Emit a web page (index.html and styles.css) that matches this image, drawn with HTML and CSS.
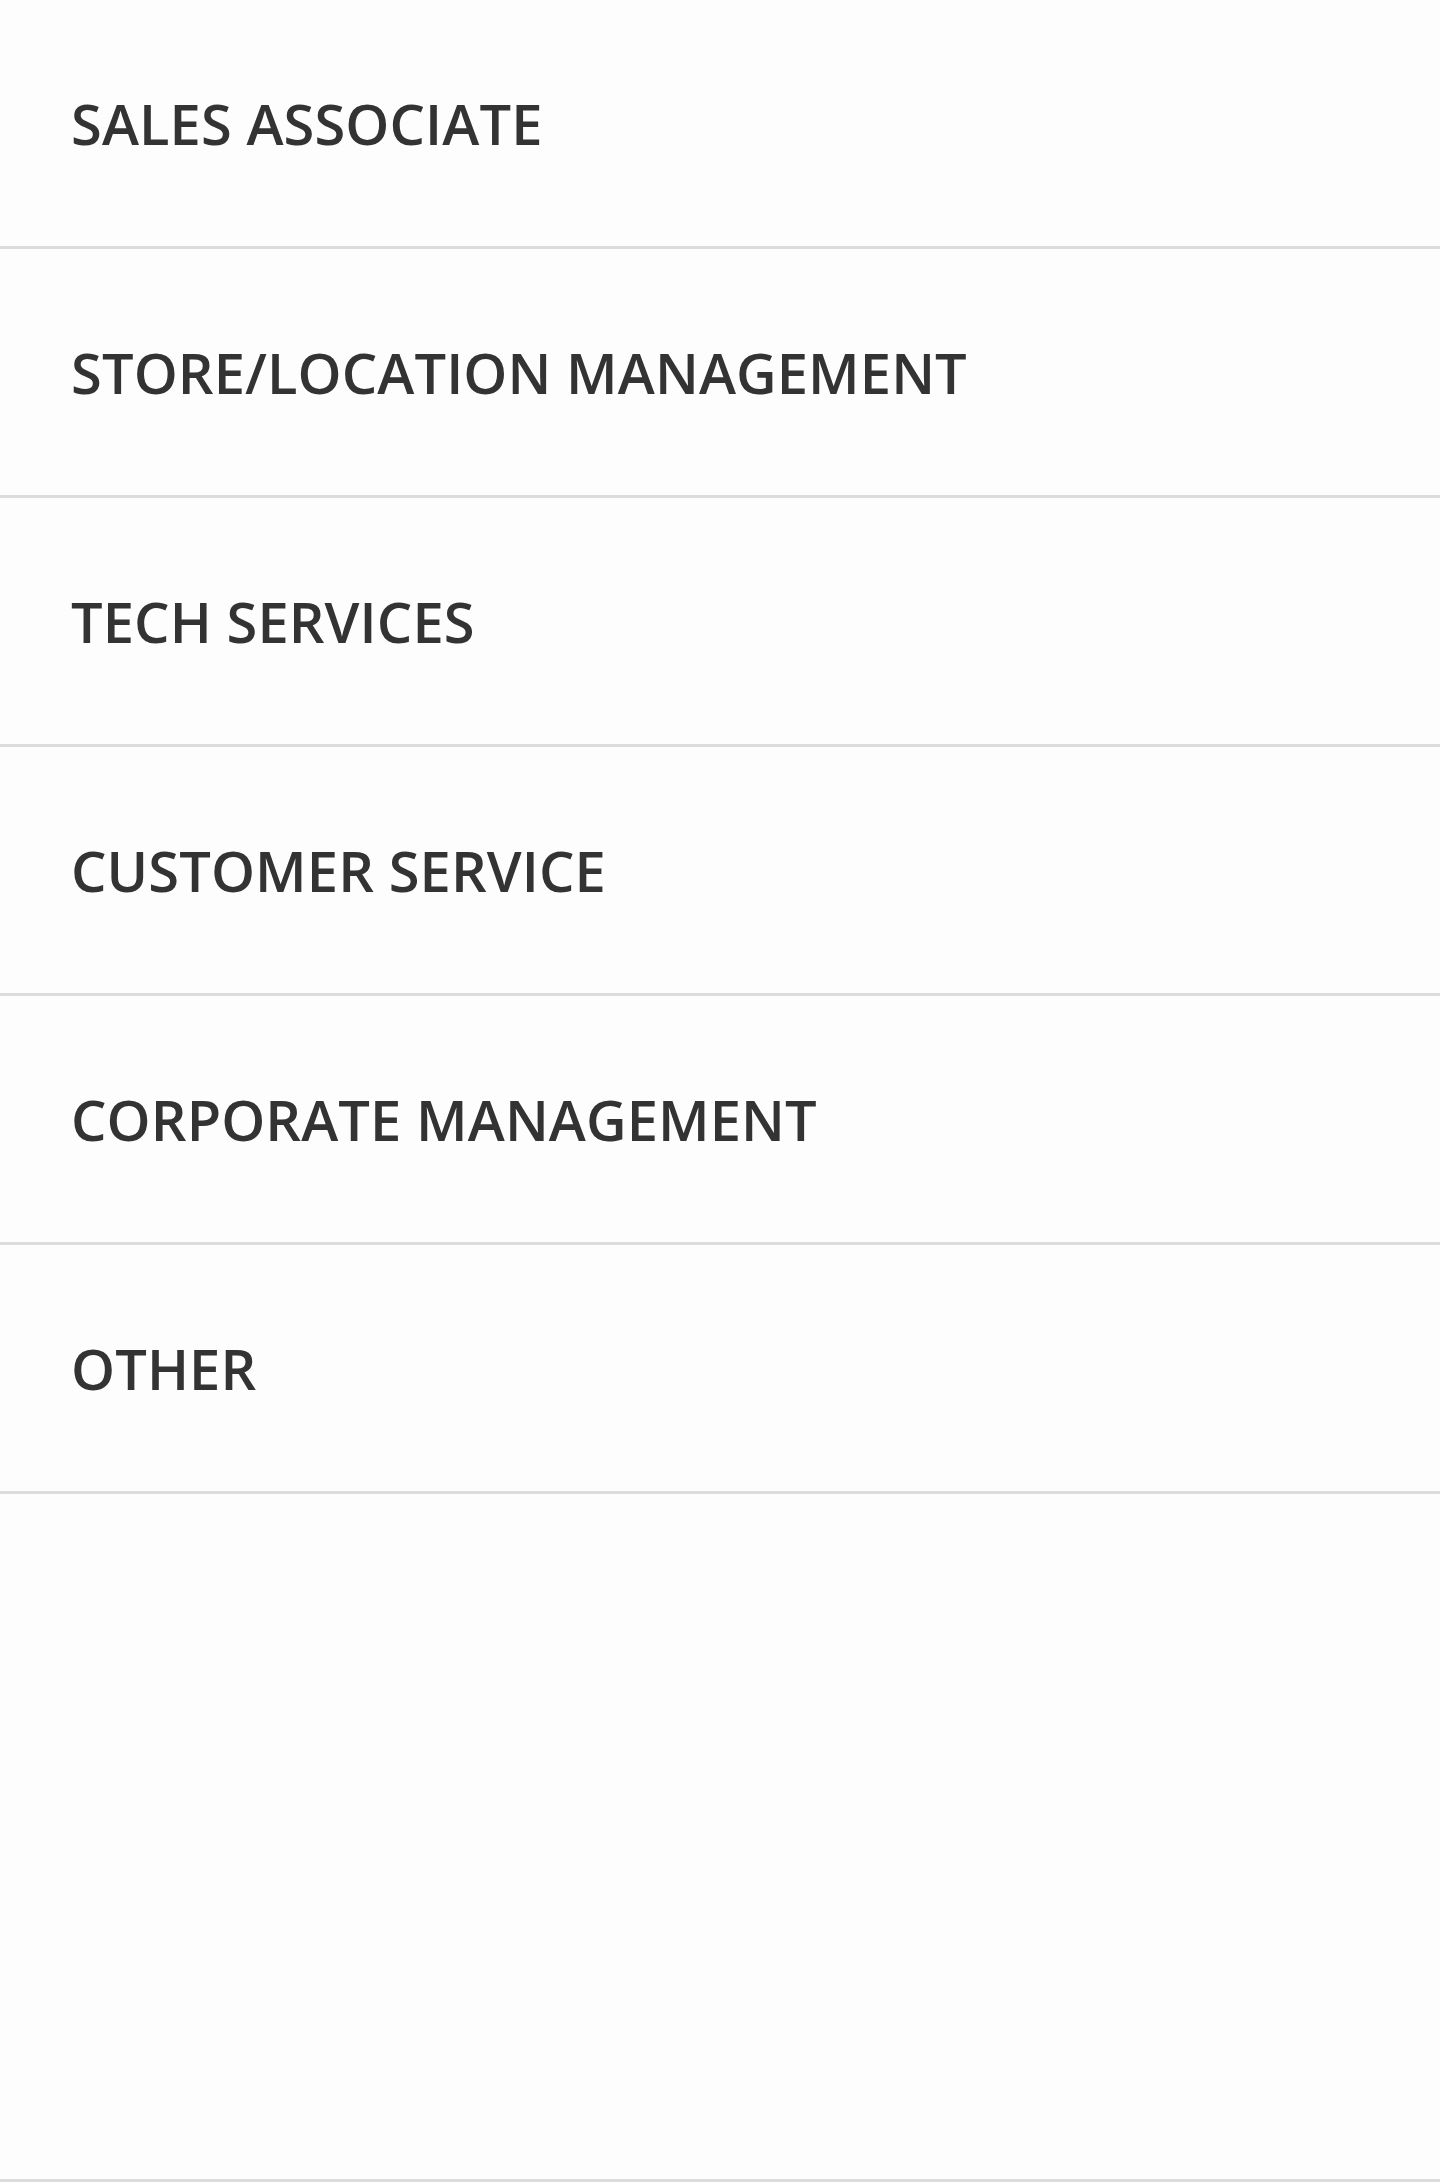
FILE: index.html
```html
<!DOCTYPE html>
<html lang="en">
<head>
<meta charset="utf-8">
<title>Job categories</title>
<link rel="stylesheet" href="styles.css">
</head>
<body>
<div class="page">
  <ul class="list">
    <li class="item">SALES ASSOCIATE</li>
    <li class="item">STORE/LOCATION MANAGEMENT</li>
    <li class="item">TECH SERVICES</li>
    <li class="item">CUSTOMER SERVICE</li>
    <li class="item">CORPORATE MANAGEMENT</li>
    <li class="item">OTHER</li>
  </ul>
  <div class="filler"></div>
</div>
</body>
</html>
```

FILE: styles.css
```css
html, body {
  margin: 0;
  padding: 0;
  background: #fdfdfd;
}
.page {
  display: flex;
  flex-direction: column;
  min-height: 100vh;
  box-sizing: border-box;
  border-bottom: 3px solid #dcdcdc;
}
.list {
  list-style: none;
  margin: 0;
  padding: 0;
}
.item {
  display: flex;
  align-items: center;
  height: 246px;
  padding-left: 71px;
  border-bottom: 3px solid #dcdcdc;
  font-family: "Open Sans", "Liberation Sans", sans-serif;
  font-weight: 600;
  font-size: 56px;
  letter-spacing: 0.1px;
  color: #333333;
}
.filler {
  flex: 1;
}
```
